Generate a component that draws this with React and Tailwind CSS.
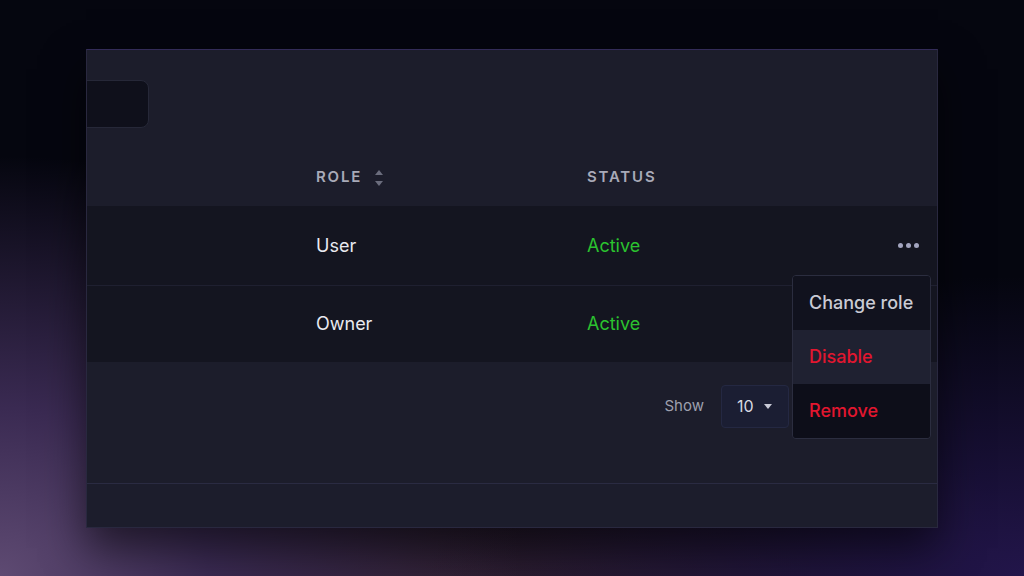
import React from 'react'

const font = { fontFamily: 'Inter, "Noto Sans", sans-serif' }

function SortIcon() {
  return (
    <svg width="10" height="20" viewBox="0 0 10 20" className="ml-3">
      <path d="M1 7 L5 2 L9 7 Z" fill="#6b6d7d" />
      <path d="M1 13 L5 18 L9 13 Z" fill="#6b6d7d" />
    </svg>
  )
}

function Row({ role, status, dots, className }) {
  return (
    <div className={'flex items-center bg-[#141520] ' + className}>
      <div className="w-[500px] pl-[229px] text-[18px] text-[#e9eaf0]">{role}</div>
      <div className="flex-1 text-[18px] text-[#2bc22f]">{status}</div>
      {dots && (
        <div className="mr-[18px] flex gap-[3px]">
          <span className="h-[5px] w-[5px] rounded-full bg-[#a3a5bf]" />
          <span className="h-[5px] w-[5px] rounded-full bg-[#a3a5bf]" />
          <span className="h-[5px] w-[5px] rounded-full bg-[#a3a5bf]" />
        </div>
      )}
    </div>
  )
}

export default function App() {
  return (
    <div
      style={font}
      className="flex min-h-screen items-center justify-center bg-[#05060f] bg-[radial-gradient(ellipse_520px_420px_at_0%_100%,#5e4a72_0%,#3a2a52_40%,transparent_100%),radial-gradient(ellipse_600px_300px_at_100%_100%,#22154a_0%,transparent_100%),radial-gradient(ellipse_700px_260px_at_40%_110%,#3a2636_0%,transparent_100%)]"
    >
      <div className="relative flex h-[479px] w-[852px] flex-col overflow-hidden border border-[#29283f] border-t-[#332c58] bg-[#1c1d2b] shadow-[0_20px_40px_rgba(0,0,0,0.55)]">
        {/* search box cut off at the left */}
        <div className="mt-[30px] ml-[-140px] h-[48px] w-[202px] rounded-lg border border-[#262838] bg-[#0f101b]" />

        {/* header */}
        <div className="mt-[22px] flex h-[56px] items-center text-[15px] font-semibold tracking-[0.12em] text-[#a8aab8]">
          <div className="flex w-[500px] items-center pl-[229px]">
            ROLE
            <SortIcon />
          </div>
          <div>STATUS</div>
        </div>

        <Row role="User" status="Active" dots className="h-[79px]" />
        <Row role="Owner" status="Active" className="h-[77px] border-t border-[#1f2030]" />

        {/* footer */}
        <div className="flex h-[121px] items-start justify-end pt-[23px] pr-[148px]">
          <div className="flex items-center gap-[17px]">
            <span className="text-[15px] text-[#9ea0ae]">Show</span>
            <div className="flex h-[43px] w-[68px] items-center gap-[10px] rounded border border-[#242842] bg-[#1b1e33] pl-[15px] text-[16px] text-[#d9dae2]">
              10
              <svg width="8" height="5" viewBox="0 0 8 5">
                <path d="M0 0 L8 0 L4 5 Z" fill="#c9cad6" />
              </svg>
            </div>
          </div>
        </div>

        <div className="flex-1 border-t border-[#2a2b42] bg-[#1c1d2c]" />

        {/* action menu */}
        <div className="absolute top-[225px] left-[705px] flex w-[139px] flex-col overflow-hidden rounded border border-[#2b2d3f] text-[18px] font-medium">
          <div className="flex h-[54px] items-center bg-[#11121e] pl-[16px] text-[#cacbd4]">Change role</div>
          <div className="flex h-[54px] items-center bg-[#1f2131] pl-[16px] text-[#e2162f]">Disable</div>
          <div className="flex h-[54px] items-center bg-[#0d0e19] pl-[16px] text-[#e2162f]">Remove</div>
        </div>
      </div>
    </div>
  )
}
